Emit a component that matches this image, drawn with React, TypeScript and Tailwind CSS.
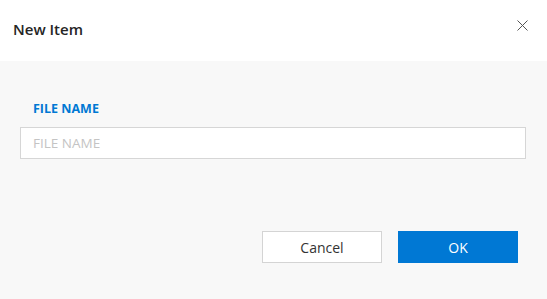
export default function App() {
  return (
    <div className="flex h-[299px] w-[547px] flex-col overflow-hidden bg-[#f8f8f8] font-['Open_Sans',sans-serif]">
      <div className="flex h-[61px] shrink-0 items-start justify-between bg-white pl-[13px] pr-[19px]">
        <h1 className="mt-[19px] text-[15px] font-semibold leading-[20px] text-[#252525]">New Item</h1>
        <button className="mt-[19px] flex h-[12px] w-[12px] items-center justify-center text-[#555]" aria-label="Close">
          <svg width="11" height="11" viewBox="0 0 11 11" fill="none" stroke="currentColor" strokeWidth="1">
            <path d="M0.5 0.5L10.5 10.5M10.5 0.5L0.5 10.5" />
          </svg>
        </button>
      </div>
      <div className="flex flex-1 flex-col px-[20px] pt-[40px]">
        <label className="ml-[13px] text-[12.5px] font-bold leading-[16px] text-[#0078d4]">FILE NAME</label>
        <input
          placeholder="FILE NAME"
          className="mt-[10px] h-[32px] w-[506px] border border-[#d6d6d6] bg-white px-[12px] text-[13.5px] text-[#333] outline-none placeholder:text-[#c4c4c4]"
        />
        <div className="mt-[72px] flex justify-end gap-[16px] pr-[9px]">
          <button className="h-[32px] w-[120px] border border-[#d4d4d4] bg-white text-[14px] text-[#333]">Cancel</button>
          <button className="h-[32px] w-[120px] bg-[#0078d4] text-[14px] text-white">OK</button>
        </div>
      </div>
    </div>
  );
}
